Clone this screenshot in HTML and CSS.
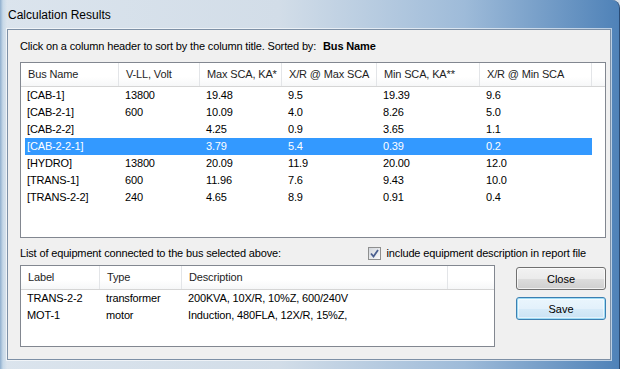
FILE: index.html
```html
<!DOCTYPE html>
<html lang="en">
<head>
    <meta charset="UTF-8">
    <title>Calculation Results</title>
    <link rel="stylesheet" href="styles.css">
</head>
<body>

    <div class="window">
        <div class="titlebar">Calculation Results</div>

        <div class="client">
            <div class="sort-line">Click on a column header to sort by the column title. Sorted by: <b>Bus Name</b></div>

            <div class="listview results">
                <div class="lv-head">
                    <span>Bus Name</span>
                    <span>V-LL, Volt</span>
                    <span>Max SCA, KA*</span>
                    <span>X/R @ Max SCA</span>
                    <span>Min SCA, KA**</span>
                    <span>X/R @ Min SCA</span>
                    <span class="filler"></span>
                </div>
                <div class="lv-row"><span>[CAB-1]</span><span>13800</span><span>19.48</span><span>9.5</span><span>19.39</span><span>9.6</span></div>
                <div class="lv-row"><span>[CAB-2-1]</span><span>600</span><span>10.09</span><span>4.0</span><span>8.26</span><span>5.0</span></div>
                <div class="lv-row"><span>[CAB-2-2]</span><span></span><span>4.25</span><span>0.9</span><span>3.65</span><span>1.1</span></div>
                <div class="lv-row selected"><span>[CAB-2-2-1]</span><span></span><span>3.79</span><span>5.4</span><span>0.39</span><span>0.2</span></div>
                <div class="lv-row"><span>[HYDRO]</span><span>13800</span><span>20.09</span><span>11.9</span><span>20.00</span><span>12.0</span></div>
                <div class="lv-row"><span>[TRANS-1]</span><span>600</span><span>11.96</span><span>7.6</span><span>9.43</span><span>10.0</span></div>
                <div class="lv-row"><span>[TRANS-2-2]</span><span>240</span><span>4.65</span><span>8.9</span><span>0.91</span><span>0.4</span></div>
            </div>

            <div class="equip-bar">
                <span>List of equipment connected to the bus selected above:</span>
                <label class="check">
                    <span class="box">
                        <svg width="9" height="9" viewBox="0 0 9 9"><path d="M1 4.5 L3.5 7.5 L8 1" fill="none" stroke="#4a5f8f" stroke-width="1.8"/></svg>
                    </span>
                    include equipment description in report file
                </label>
            </div>

            <div class="equip-row">
                <div class="listview equip">
                    <div class="lv-head">
                        <span>Label</span>
                        <span>Type</span>
                        <span>Description</span>
                        <span class="filler"></span>
                    </div>
                    <div class="lv-row"><span>TRANS-2-2</span><span>transformer</span><span>200KVA, 10X/R, 10%Z, 600/240V</span></div>
                    <div class="lv-row"><span>MOT-1</span><span>motor</span><span>Induction, 480FLA, 12X/R, 15%Z,</span></div>
                </div>

                <div class="buttons">
                    <button>Close</button>
                    <button class="default">Save</button>
                </div>
            </div>
        </div>
    </div>

</body>
</html>
```

FILE: styles.css
```css
body {
    margin: 0;
    width: 620px;
    height: 369px;
    overflow: hidden;
    background: #d9e1ea;
    font-family: "Liberation Sans", Arial, sans-serif;
    font-size: 11px;
    letter-spacing: -0.15px;
    color: #000;
}

.window {
    height: 369px;
    box-sizing: border-box;
    padding: 0 8px 9px 7px;
    border-top-right-radius: 8px;
    border-right: 1px solid #2b4b74;
    background:
        linear-gradient(90deg, rgba(80, 130, 180, 0.55) 0, rgba(170, 200, 225, 0.4) 3px, rgba(0, 0, 0, 0) 7px),
        linear-gradient(90deg, #dbe4ed 0%, #d2dde8 45%, #9ebbd9 75%, #4f82b8 100%);
    display: flex;
    flex-direction: column;
}

.titlebar {
    height: 29px;
    line-height: 30px;
    padding-left: 1px;
    font-size: 12px;
    letter-spacing: 0;
    flex: none;
}

.client {
    flex: 1;
    background: #f0f0f0;
    border: 1px solid #7d90a6;
    box-shadow: 0 0 0 1px rgba(255, 255, 255, 0.6);
    padding: 8px 4px 0 12px;
}

.sort-line {
    height: 16px;
    line-height: 16px;
    margin-bottom: 8px;
}

.sort-line b {
    margin-left: 4px;
}

/* list views */
.listview {
    background: #fff;
    border: 1px solid #828790;
    overflow: hidden;
}

.results {
    height: 174px;
}

.lv-head {
    display: grid;
    height: 23px;
    line-height: 23px;
    border-bottom: 1px solid #d5d5d5;
    background: linear-gradient(#ffffff 0%, #ffffff 60%, #f6f7f8 100%);
    color: #1e1e1e;
}

.lv-head span {
    padding-left: 7px;
    border-right: 1px solid #e3e5e8;
    white-space: nowrap;
    overflow: hidden;
}

.lv-head .filler {
    border-right: none;
}

.lv-row {
    display: grid;
    height: 17px;
    line-height: 17px;
    margin-left: 4px;
}

.lv-row span {
    padding-left: 6px;
    white-space: nowrap;
    overflow: hidden;
}

.lv-row span:first-child {
    padding-left: 2px;
}

.lv-row.selected span {
    background: #3399ff;
    color: #fff;
}

.results .lv-head {
    grid-template-columns: 98px 81px 82px 95px 103px 112px 1fr;
}

.results .lv-row {
    grid-template-columns: 94px 81px 82px 95px 103px 112px;
}

.equip-bar {
    display: flex;
    justify-content: space-between;
    height: 16px;
    line-height: 16px;
    margin: 7px 0 4px;
}

.check {
    display: flex;
    align-items: center;
    gap: 6px;
    margin-right: 20px;
}

.box {
    width: 11px;
    height: 11px;
    border: 1px solid #8e8f8f;
    background: linear-gradient(135deg, #d3d7dd, #fafafa);
    display: flex;
    align-items: center;
    justify-content: center;
}

.equip-row {
    display: flex;
    gap: 21px;
}

.equip {
    width: 474px;
    height: 80px;
}

.equip .lv-head {
    grid-template-columns: 79px 82px 266px 1fr;
}

.equip .lv-row {
    grid-template-columns: 75px 82px 266px;
}

.buttons {
    display: flex;
    flex-direction: column;
    gap: 7px;
    padding-top: 2px;
}

button {
    width: 90px;
    height: 23px;
    font-family: "Liberation Sans", Arial, sans-serif;
    font-size: 11px;
    color: #000;
    border: 1px solid #707070;
    border-radius: 3px;
    background: linear-gradient(#f2f2f2 0%, #ebebeb 50%, #dddddd 51%, #cfcfcf 100%);
    box-shadow: inset 0 0 0 1px rgba(255, 255, 255, 0.7);
    padding: 0;
}

button.default {
    border-color: #3c7fb1;
    box-shadow: inset 0 0 0 1px #9fdcf5, inset 0 0 0 2px rgba(255, 255, 255, 0.5);
    background: linear-gradient(#eaf6fd 0%, #e3f1fb 50%, #d7ebf8 51%, #c9e2f4 100%);
}
```
